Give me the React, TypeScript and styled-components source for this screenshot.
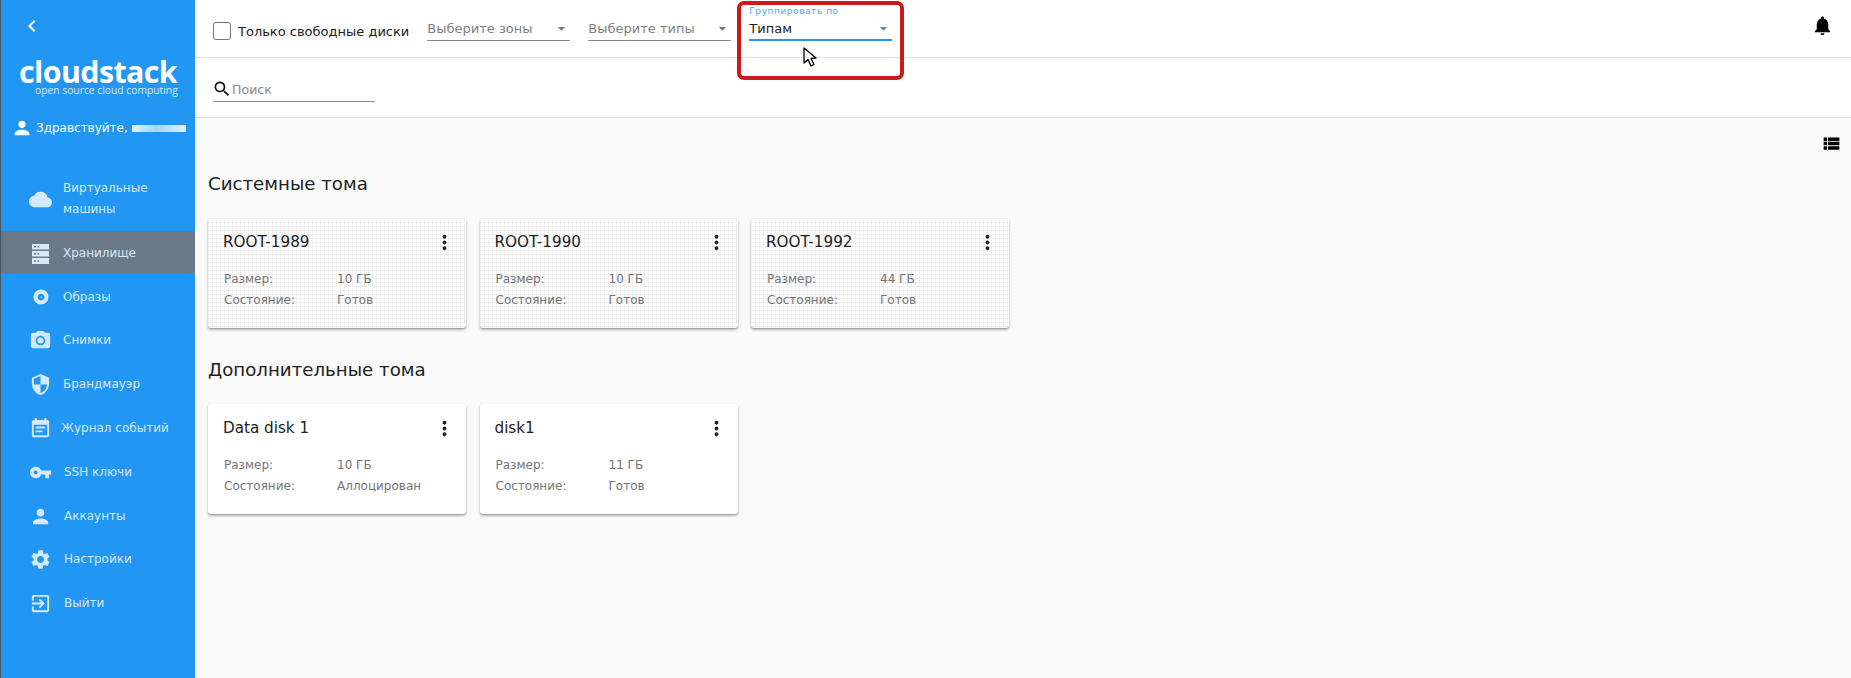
import React from "react";
import styled, { createGlobalStyle } from "styled-components";
import {
  MdAlbum,
  MdArrowDropDown,
  MdCameraAlt,
  MdChevronLeft,
  MdCloud,
  MdEventNote,
  MdExitToApp,
  MdMoreVert,
  MdNotifications,
  MdPerson,
  MdSearch,
  MdSecurity,
  MdSettings,
  MdVpnKey,
  MdViewList,
} from "react-icons/md";

const GlobalStyle = createGlobalStyle`
  html, body {
    margin: 0;
    padding: 0;
    height: 100%;
    overflow: hidden;
    font-family: "DejaVu Sans", sans-serif;
    background: #fafafa;
  }
`;

const Page = styled.div`
  display: flex;
  height: 678px;
  position: relative;
  overflow: hidden;
`;

const Sidebar = styled.aside`
  flex: 0 0 195px;
  width: 195px;
  min-width: 0;
  box-sizing: border-box;
  background: #2196f3;
  border-left: 1px solid #4a5560;
  color: #fff;
  display: flex;
  flex-direction: column;
`;

const CollapseButton = styled.div`
  height: 52px;
  padding-left: 19px;
  display: flex;
  align-items: center;
  font-size: 24px;
`;

const Logo = styled.div`
  height: 47px;
  padding-left: 18px;
  display: flex;
  flex-direction: column;
  font-family: "Open Sans", sans-serif;
  white-space: nowrap;
`;

const LogoName = styled.div`
  font-size: 30.4px;
  font-weight: 700;
  line-height: 26px;
  letter-spacing: -0.6px;
  margin-top: 7px;
`;

const LogoTag = styled.div`
  padding-left: 16px;
  font-size: 10.3px;
  line-height: 11px;
  color: #d5e9fc;
`;

const Greeting = styled.div`
  height: 30px;
  margin-top: 14px;
  padding-left: 10px;
  display: flex;
  align-items: center;
  gap: 3px;
  font-size: 12px;
  white-space: nowrap;
`;

const BlurName = styled.span`
  margin-left: 1px;
  width: 54px;
  height: 7px;
  background: linear-gradient(90deg, #e8f3fe, #a9d5f9 45%, #cfe6fc 80%, #e8f3fe);
`;

const Nav = styled.nav`
  margin-top: 22px;
  display: flex;
  flex-direction: column;
`;

const NavRow = styled.div<{ $h: number; $active?: boolean }>`
  height: ${(p) => p.$h}px;
  box-sizing: border-box;
  padding-top: 2px;
  display: flex;
  align-items: center;
  padding-left: 28px;
  background: ${(p) => (p.$active ? "#6c7a87" : "transparent")};
  color: #d5e9fc;
`;

const NavIcon = styled.span`
  flex: 0 0 23px;
  display: flex;
  justify-content: center;
  font-size: 23px;
`;

const NavLabel = styled.span<{ $shift?: number }>`
  margin-left: ${(p) => 11 + (p.$shift ?? 0)}px;
  width: 116px;
  font-size: 12px;
  line-height: 21px;
`;

const Main = styled.main`
  flex: 1;
  min-width: 0;
  display: flex;
  flex-direction: column;
`;

const TopBar = styled.header`
  height: 57px;
  flex: none;
  background: #fff;
  border-bottom: 1px solid #e0e0e0;
  padding-left: 18px;
  display: flex;
  align-items: flex-start;
`;

const CheckLabel = styled.label`
  display: flex;
  align-items: center;
  gap: 7px;
  margin-top: 22px;
  margin-right: 18px;
  font-size: 13px;
  color: #212121;
  white-space: nowrap;
`;

const CheckBox = styled.span`
  width: 18px;
  height: 18px;
  box-sizing: border-box;
  border: 1.5px solid #757575;
  border-radius: 3px;
`;

const SelectField = styled.div<{ $focused?: boolean }>`
  position: relative;
  width: 143px;
  height: 41px;
  box-sizing: border-box;
  margin-right: 18px;
  padding-top: 20px;
  border-bottom: ${(p) => (p.$focused ? "2px solid #2196f3" : "1px solid #8a8a8a")};
  font-size: 13px;
  line-height: 18px;
  color: ${(p) => (p.$focused ? "#212121" : "#808080")};
  white-space: nowrap;
`;

const SelectLabel = styled.span`
  position: absolute;
  left: 0;
  top: 5px;
  font-size: 9.1px;
  line-height: 12px;
  letter-spacing: 0.5px;
  color: #4aa8f4;
`;

const SelectArrow = styled.span<{ $focused?: boolean }>`
  position: absolute;
  right: 0;
  top: 20px;
  font-size: 17px;
  line-height: 17px;
  display: flex;
  color: ${(p) => (p.$focused ? "#2196f3" : "#757575")};
`;

const BellButton = styled.div`
  margin-left: auto;
  margin-right: 17px;
  margin-top: 14px;
  display: flex;
  font-size: 23px;
  color: #000;
`;

const SearchBar = styled.div`
  height: 59px;
  flex: none;
  background: #fff;
  border-bottom: 1px solid #e0e0e0;
  padding-left: 18px;
`;

const SearchField = styled.div`
  margin-top: 19px;
  width: 162px;
  height: 24px;
  border-bottom: 1px solid #8a8a8a;
  display: flex;
  align-items: center;
  font-size: 12.6px;
  color: #8a8a8a;
`;

const SearchIcon = styled.span`
  display: flex;
  font-size: 20px;
  margin-left: -1px;
  color: #111;
`;

const Content = styled.div`
  flex: 1;
  padding: 0 9px 0 13px;
  background: #fafafa;
  display: flex;
  flex-direction: column;
`;

const ViewToggle = styled.div`
  align-self: flex-end;
  margin-top: 15px;
  display: flex;
  font-size: 21px;
  color: #000;
`;

const SectionTitle = styled.h2<{ $top: number }>`
  margin: ${(p) => p.$top}px 0 0;
  font-size: 18.2px;
  font-weight: 400;
  line-height: 24px;
  color: #212121;
`;

const CardRow = styled.div`
  display: flex;
  gap: 13.5px;
  margin-top: 22px;
`;

const Card = styled.article<{ $root?: boolean }>`
  width: 258px;
  height: 110px;
  box-sizing: border-box;
  padding: 12px 10px 0 15px;
  border-radius: 3px;
  background-color: #fff;
  background-image: ${(p) =>
    p.$root
      ? "linear-gradient(90deg, #efefef 1px, transparent 1px), linear-gradient(#efefef 1px, transparent 1px)"
      : "none"};
  background-size: 4px 4px;
  box-shadow: 0 1px 1px rgba(0, 0, 0, 0.14), 0 2px 3px rgba(0, 0, 0, 0.28);
`;

const CardHead = styled.div`
  display: flex;
  align-items: center;
  justify-content: space-between;
  height: 24px;
`;

const CardTitle = styled.div`
  font-size: 15.2px;
  color: #212121;
`;

const KebabButton = styled.span`
  display: flex;
  font-size: 23px;
  color: #212121;
`;

const Details = styled.dl`
  margin: 14px 0 0 1px;
  display: grid;
  grid-template-columns: 113px 1fr;
  grid-auto-rows: 21.5px;
  align-items: center;
  font-size: 12px;
  color: #757575;
`;

const Term = styled.dt``;

const Value = styled.dd`
  margin: 0;
`;

const Annotation = styled.div`
  position: absolute;
  left: 737px;
  top: 1px;
  width: 167px;
  height: 79px;
  box-sizing: border-box;
  border: 4px solid #cc1a1a;
  border-radius: 7px;
  pointer-events: none;
`;

const Pointer = styled.svg`
  position: absolute;
  left: 803px;
  top: 47px;
  width: 15px;
  height: 21px;
`;

// rack icon: taller than the Material storage glyph in the reference
function RackIcon() {
  return (
    <svg width="17" height="20" viewBox="0 0 17 20" fill="currentColor">
      <path
        fillRule="evenodd"
        d="M0 0h17v5.5H0zM2 2v1.5h2V2zM5.5 2v1.5h1.5V2zM0 7h17v5.5H0zM2 9v1.5h2V9zM5.5 9v1.5h1.5V9zM0 14h17v6H0zM2 16.2v1.5h2v-1.5zM5.5 16.2v1.5h1.5v-1.5z"
      />
    </svg>
  );
}

const navItems = [
  { label: "Виртуальные машины", icon: <MdCloud />, h: 66 },
  { label: "Хранилище", icon: <RackIcon />, h: 43, active: true },
  { label: "Образы", icon: <MdAlbum size={18} />, h: 44 },
  { label: "Снимки", icon: <MdCameraAlt />, h: 43 },
  { label: "Брандмауэр", icon: <MdSecurity />, h: 44 },
  { label: "Журнал событий", icon: <MdEventNote />, h: 44, shift: -2 },
  { label: "SSH ключи", icon: <MdVpnKey />, h: 45, shift: 1 },
  { label: "Аккаунты", icon: <MdPerson />, h: 43, shift: 1 },
  { label: "Настройки", icon: <MdSettings />, h: 43, shift: 1 },
  { label: "Выйти", icon: <MdExitToApp />, h: 45, shift: 1 },
];

const systemVolumes = [
  { name: "ROOT-1989", size: "10 ГБ", state: "Готов" },
  { name: "ROOT-1990", size: "10 ГБ", state: "Готов" },
  { name: "ROOT-1992", size: "44 ГБ", state: "Готов" },
];

const dataVolumes = [
  { name: "Data disk 1", size: "10 ГБ", state: "Аллоцирован" },
  { name: "disk1", size: "11 ГБ", state: "Готов" },
];

function VolumeCard(props: { name: string; size: string; state: string; root?: boolean }) {
  return (
    <Card $root={props.root}>
      <CardHead>
        <CardTitle>{props.name}</CardTitle>
        <KebabButton>
          <MdMoreVert />
        </KebabButton>
      </CardHead>
      <Details>
        <Term>Размер:</Term>
        <Value>{props.size}</Value>
        <Term>Состояние:</Term>
        <Value>{props.state}</Value>
      </Details>
    </Card>
  );
}

function App() {
  return (
    <Page>
      <GlobalStyle />
      <Sidebar>
        <CollapseButton>
          <MdChevronLeft />
        </CollapseButton>
        <Logo>
          <LogoName>cloudstack</LogoName>
          <LogoTag>open source cloud computing</LogoTag>
        </Logo>
        <Greeting>
          <MdPerson size={22} />
          Здравствуйте,
          <BlurName />
        </Greeting>
        <Nav>
          {navItems.map((item) => (
            <NavRow key={item.label} $h={item.h} $active={item.active}>
              <NavIcon>{item.icon}</NavIcon>
              <NavLabel $shift={item.shift}>{item.label}</NavLabel>
            </NavRow>
          ))}
        </Nav>
      </Sidebar>
      <Main>
        <TopBar>
          <CheckLabel>
            <CheckBox />
            Только свободные диски
          </CheckLabel>
          <SelectField>
            Выберите зоны
            <SelectArrow>
              <MdArrowDropDown />
            </SelectArrow>
          </SelectField>
          <SelectField>
            Выберите типы
            <SelectArrow>
              <MdArrowDropDown />
            </SelectArrow>
          </SelectField>
          <SelectField $focused>
            <SelectLabel>Группировать по</SelectLabel>
            Типам
            <SelectArrow $focused>
              <MdArrowDropDown />
            </SelectArrow>
          </SelectField>
          <BellButton>
            <MdNotifications />
          </BellButton>
        </TopBar>
        <SearchBar>
          <SearchField>
            <SearchIcon>
              <MdSearch />
            </SearchIcon>
            Поиск
          </SearchField>
        </SearchBar>
        <Content>
          <ViewToggle>
            <MdViewList />
          </ViewToggle>
          <SectionTitle $top={18}>Системные тома</SectionTitle>
          <CardRow>
            {systemVolumes.map((v) => (
              <VolumeCard key={v.name} {...v} root />
            ))}
          </CardRow>
          <SectionTitle $top={30}>Дополнительные тома</SectionTitle>
          <CardRow>
            {dataVolumes.map((v) => (
              <VolumeCard key={v.name} {...v} />
            ))}
          </CardRow>
        </Content>
      </Main>
      <Annotation />
      <Pointer viewBox="0 0 15 21">
        <path d="M1 1 L1 16 L5 12.5 L8 19 L11 17.5 L8 11.5 L13 11 Z" fill="#fff" stroke="#000" strokeWidth="1.3" strokeLinejoin="round" />
      </Pointer>
    </Page>
  );
}

export default App;
